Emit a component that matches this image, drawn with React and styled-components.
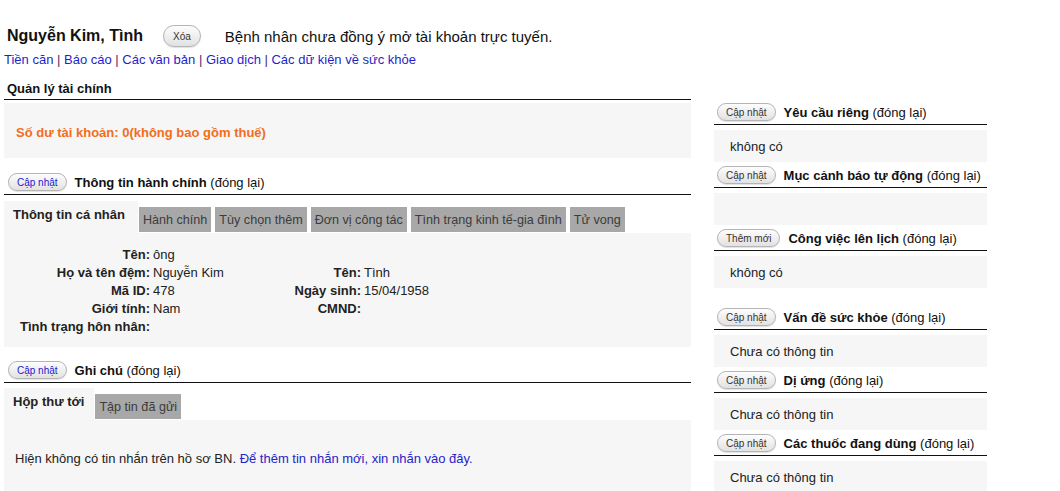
import React from 'react';
import styled, { createGlobalStyle } from 'styled-components';

const GlobalStyle = createGlobalStyle`
  body {
    margin: 0;
    background: #fff;
    font-family: "Liberation Sans", Arial, sans-serif;
    color: #111;
  }
`;

const Page = styled.div`
  width: 1060px;
  height: 491px;
  overflow: hidden;
  padding: 25px 4px 0;
  box-sizing: border-box;
`;

const TopBar = styled.div`
  display: flex;
  align-items: center;
  height: 22px;
  padding-left: 3px;
`;

const PatientName = styled.span`
  font-size: 16px;
  font-weight: bold;
  color: #111;
`;

const Notice = styled.span`
  font-size: 15px;
  color: #111;
  margin-left: 24px;
`;

const Pill = styled.button`
  font-family: "Liberation Sans", Arial, sans-serif;
  font-size: 10px;
  color: ${p => (p.$blue ? '#1a1ad0' : '#333')};
  height: ${p => (p.$big ? '22px' : '18px')};
  padding: 0 ${p => (p.$big ? '9px' : '8px')};
  margin: ${p => p.$margin || '0'};
  border: 1px solid #b5b5b5;
  border-radius: 11px;
  background: linear-gradient(#fdfdfd, #e2e2e2);
  box-shadow: 0 1px 1px rgba(0, 0, 0, 0.12);
  white-space: nowrap;
  cursor: pointer;
  flex-shrink: 0;
`;

const NavLinks = styled.div`
  font-size: 13px;
  height: 16px;
  line-height: 16px;
  margin-top: 5px;
  color: #4a2a6a;
  a {
    color: #1f1fc8;
    text-decoration: none;
  }
`;

const Columns = styled.div`
  display: flex;
  gap: 23px;
  align-items: flex-start;
`;

const LeftCol = styled.div`
  width: 687px;
`;

const RightCol = styled.div`
  width: 273px;
  padding-top: 32px;
`;

const PlainHeading = styled.div`
  font-size: 13px;
  font-weight: bold;
  margin-top: 12px;
  padding: 0 3px;
  height: 19px;
  line-height: 17px;
  border-bottom: 1px solid #111;
`;

const SectionHead = styled.div`
  display: flex;
  align-items: center;
  gap: 8px;
  height: 24px;
  margin-top: ${p => p.$top || '0'};
  padding-left: ${p => p.$indent || '4px'};
  border-bottom: 1px solid #111;
  font-size: 13px;
  white-space: nowrap;
  b {
    font-weight: bold;
  }
`;

const Box = styled.div`
  background: #f6f6f6;
  margin-top: ${p => p.$top || '0'};
  height: ${p => p.$h};
  padding: ${p => p.$pad || '0'};
  box-sizing: border-box;
  font-size: 13px;
  color: #222;
  display: ${p => (p.$center ? 'flex' : 'block')};
  align-items: center;
`;

const Balance = styled.span`
  color: #f06e1e;
  font-size: 13px;
  font-weight: bold;
`;

const Tabs = styled.div`
  display: flex;
  align-items: flex-end;
  gap: 4px;
  margin-top: ${p => p.$top || '6px'};
`;

const Tab = styled.div`
  white-space: nowrap;
  display: flex;
  align-items: center;
  box-sizing: border-box;
  ${p =>
    p.$active
      ? `
    background: #f6f6f6;
    height: 32px;
    padding: 0 ${p.$pr || '10px'} 6px 9px;
    font-size: 13px;
    font-weight: bold;
    color: #222;
    margin-right: -3px;
  `
      : `
    background: #a8a8a8;
    height: 25px;
    margin-bottom: 1px;
    padding: 0 4px;
    font-size: 12.6px;
    color: #3c3c3c;
  `}
`;

const FieldGrid = styled.div`
  display: grid;
  grid-template-columns: 146px 108px 97px 1fr;
  column-gap: 3px;
  grid-auto-rows: 18px;
  align-items: center;
  font-size: 13px;
  color: #222;
`;

const Label = styled.span`
  font-weight: bold;
  text-align: right;
  white-space: nowrap;
  grid-column: ${p => p.$col || 'auto'};
`;

const Value = styled.span`
  white-space: nowrap;
`;

const Message = styled.span`
  color: #222;
  a {
    color: #2424c8;
    text-decoration: none;
  }
`;

const Header = ({ button = 'Cập nhật', title, blue, top, indent }) => (
  <SectionHead $top={top} $indent={indent}>
    <Pill $blue={blue}>{button}</Pill>
    <span>
      <b>{title}</b> (đóng lại)
    </span>
  </SectionHead>
);

const fields = [
  ['Tên:', 'ông'],
  ['Họ và tên đệm:', 'Nguyễn Kim', 'Tên:', 'Tình'],
  ['Mã ID:', '478', 'Ngày sinh:', '15/04/1958'],
  ['Giới tính:', 'Nam', 'CMND:', ''],
  ['Tình trạng hôn nhân:', ''],
];

const rightSections = [
  { title: 'Yêu cầu riêng', text: 'không có' },
  { title: 'Mục cảnh báo tự động', text: '' },
  { title: 'Công việc lên lịch', text: 'không có', button: 'Thêm mới' },
  { title: 'Vấn đề sức khỏe', text: 'Chưa có thông tin', gap: '17px' },
  { title: 'Dị ứng', text: 'Chưa có thông tin' },
  { title: 'Các thuốc đang dùng', text: 'Chưa có thông tin' },
];

export default function App() {
  return (
    <Page>
      <GlobalStyle />
      <TopBar>
        <PatientName>Nguyễn Kim, Tình</PatientName>
        <Pill $big $margin="0 0 0 20px">Xóa</Pill>
        <Notice>Bệnh nhân chưa đồng ý mở tài khoản trực tuyến.</Notice>
      </TopBar>
      <NavLinks>
        <a href="#">Tiền căn</a> | <a href="#">Báo cáo</a> | <a href="#">Các văn bản</a> |{' '}
        <a href="#">Giao dịch</a> | <a href="#">Các dữ kiện về sức khỏe</a>
      </NavLinks>

      <Columns>
        <LeftCol>
          <PlainHeading>Quản lý tài chính</PlainHeading>
          <Box $top="3px" $h="55px" $pad="4px 12px 0" $center>
            <Balance>Số dư tài khoản: 0(không bao gồm thuế)</Balance>
          </Box>

          <Header blue title="Thông tin hành chính" top="12px" />
          <Tabs>
            <Tab $active $pr="13px">Thông tin cá nhân</Tab>
            <Tab>Hành chính</Tab>
            <Tab>Tùy chọn thêm</Tab>
            <Tab>Đơn vị công tác</Tab>
            <Tab>Tình trạng kinh tế-gia đình</Tab>
            <Tab>Tử vong</Tab>
          </Tabs>
          <Box $h="114px" $pad="12px 0">
            <FieldGrid>
              {fields.map((f, i) => (
                <React.Fragment key={i}>
                  <Label $col="1">{f[0]}</Label>
                  <Value>{f[1]}</Value>
                  {f[2] !== undefined && (
                    <>
                      <Label>{f[2]}</Label>
                      <Value>{f[3]}</Value>
                    </>
                  )}
                </React.Fragment>
              ))}
            </FieldGrid>
          </Box>

          <Header blue title="Ghi chú" top="11px" />
          <Tabs $top="5px">
            <Tab $active>Hộp thư tới</Tab>
            <Tab>Tập tin đã gửi</Tab>
          </Tabs>
          <Box $h="80px" $pad="31px 11px 0">
            <Message>
              Hiện không có tin nhắn trên hồ sơ BN.{' '}
              <a href="#">Để thêm tin nhắn mới, xin nhắn vào đây.</a>
            </Message>
          </Box>
        </LeftCol>

        <RightCol>
          {rightSections.map((s, i) => (
            <React.Fragment key={i}>
              <Header
                title={s.title}
                button={s.button}
                indent="3px"
                top={i === 0 ? '0' : s.gap || '1px'}
              />
              <Box $top="5px" $h="32px" $pad="0 16px" $center>
                {s.text}
              </Box>
            </React.Fragment>
          ))}
        </RightCol>
      </Columns>
    </Page>
  );
}
